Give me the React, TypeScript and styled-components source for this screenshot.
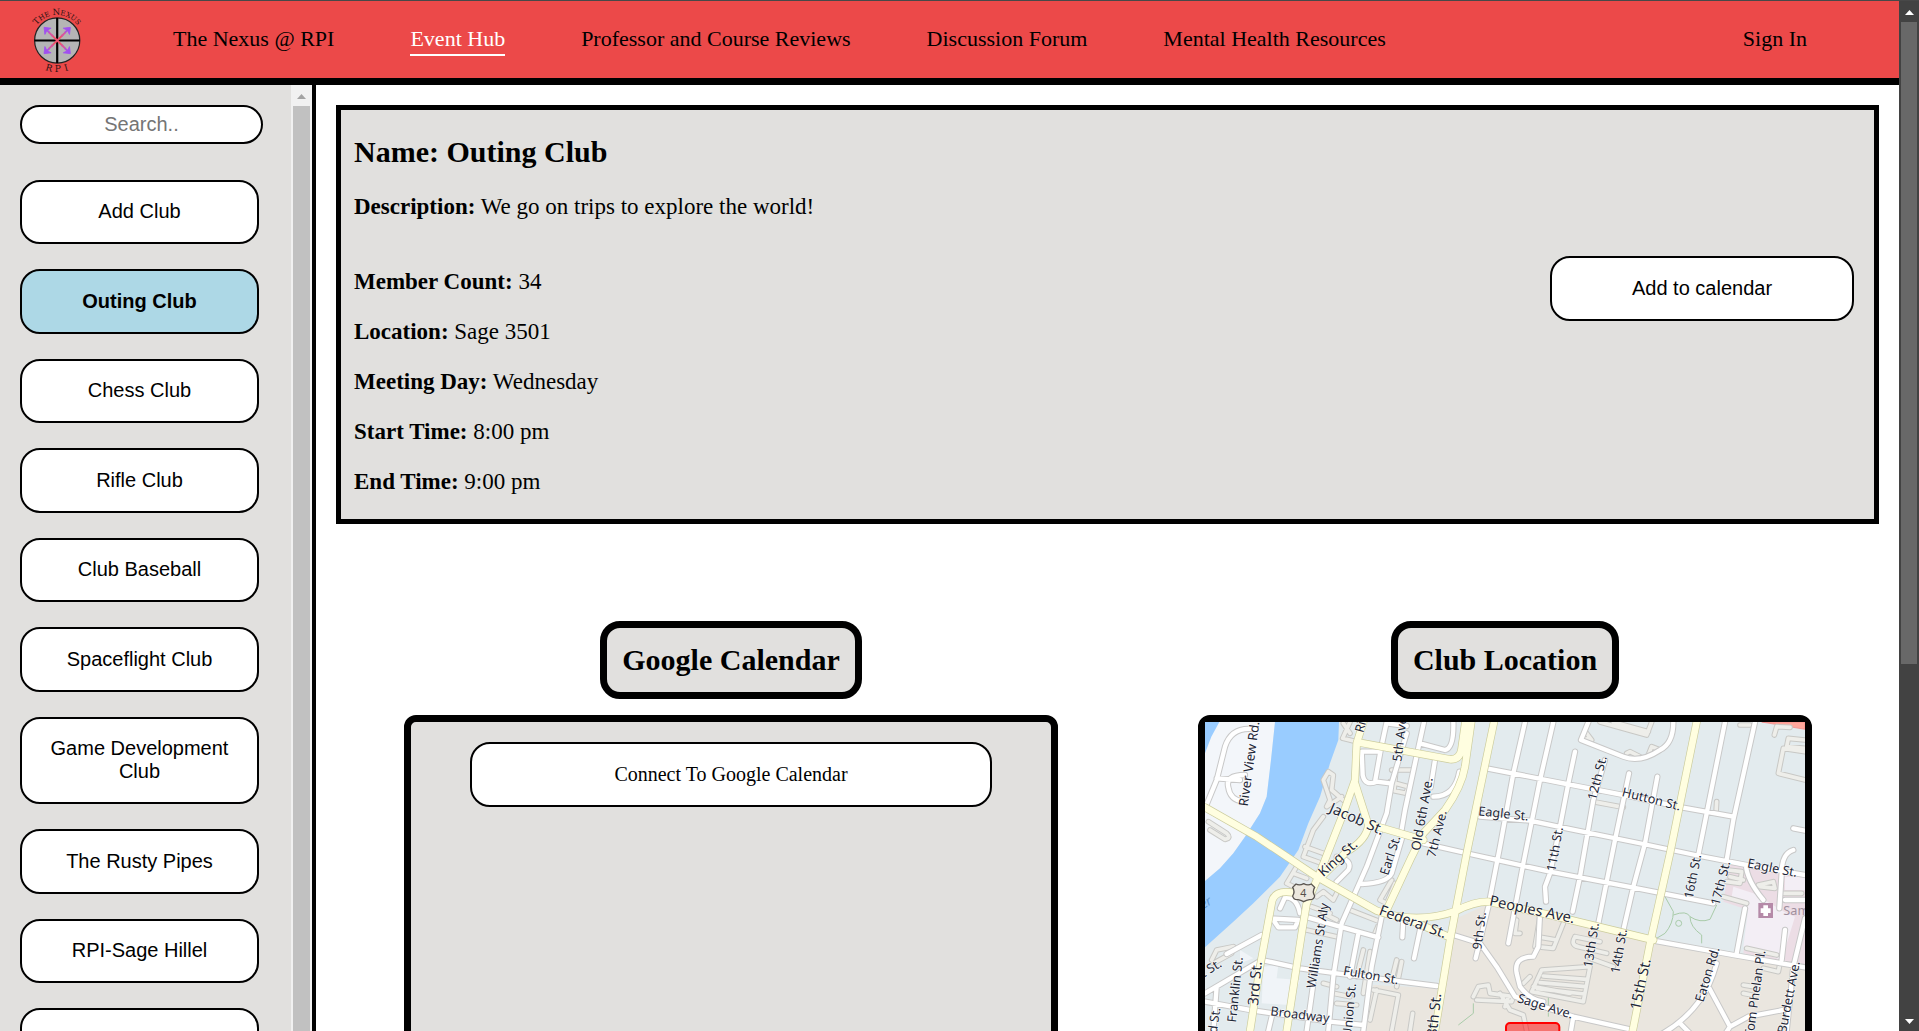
import React from "react";
import styled, { createGlobalStyle } from "styled-components";

const serif = '"Liberation Serif", "Times New Roman", serif';
const sans = '"Liberation Sans", Arial, sans-serif';
const grey = "#e1e0de";

const GlobalStyle = createGlobalStyle`
  *, *::before, *::after { box-sizing: border-box; }
  body { margin: 0; background: #fff; color: #000; font-family: ${serif}; }
  h2, p, ul, dl, dd { margin: 0; padding: 0; }
`;

const Viewport = styled.div`
  display: flex;
  height: 100vh;
  overflow: hidden;
  border-top: 1px solid #484848;
`;

const Page = styled.div`
  flex: 1;
  min-width: 0;
  display: flex;
  flex-direction: column;
`;

const Header = styled.header`
  flex: none;
  display: flex;
  align-items: center;
  height: 84px;
  padding: 0 92px 0 22px;
  background: #ec4949;
  border-bottom: 7px solid #000;
`;

const HomeLink = styled.a`
  display: flex;
  margin-right: 81px;
`;

const Nav = styled.nav`
  flex: 1;
  display: flex;
  gap: 76px;
`;

const NavLink = styled.a<{ $active?: boolean }>`
  padding: 3px 0;
  font-size: 22px;
  line-height: 25px;
  white-space: nowrap;
  text-decoration: none;
  color: ${(p) => (p.$active ? "#fff" : "#000")};
  border-bottom: 2px solid ${(p) => (p.$active ? "#fff" : "transparent")};
`;

const Body = styled.div`
  flex: 1;
  min-height: 0;
  display: flex;
`;

const Sidebar = styled.aside`
  flex: none;
  display: flex;
  width: 316px;
  overflow: hidden;
  background: ${grey};
  border-right: 4px solid #000;
`;

const SidebarContent = styled.div`
  flex: 1;
  padding: 20px 28px 20px 20px;
`;

const Search = styled.input`
  display: block;
  width: 100%;
  height: 39px;
  padding: 0;
  border: 2px solid #000;
  border-radius: 20px;
  background: #fff;
  font-family: ${sans};
  font-size: 20px;
  text-align: center;
  &::placeholder { color: #757575; }
`;

const ClubList = styled.ul`
  display: grid;
  grid-auto-rows: minmax(64px, auto) minmax(65px, auto);
  gap: 25px;
  margin-top: 36px;
  padding-right: 4px;
  list-style: none;
`;

const ClubItem = styled.li`
  display: grid;
`;

const PillButton = styled.button<{ $active?: boolean; $serif?: boolean }>`
  width: 100%;
  padding: 19px 20px;
  border: 2px solid #000;
  border-radius: 20px;
  background: ${(p) => (p.$active ? "#add8e6" : "#fff")};
  color: #000;
  font-family: ${(p) => (p.$serif ? serif : sans)};
  font-size: 20px;
  font-weight: ${(p) => (p.$active ? 700 : 400)};
  line-height: 23px;
  cursor: pointer;
`;

const ListButton = styled(PillButton)`
  padding: 18px 20px 19px;
`;

const Main = styled.main`
  flex: 1;
  min-width: 0;
  padding: 20px;
  overflow: hidden;
`;

const InfoPanel = styled.section`
  padding: 25px 20px 24px 13px;
  border: 5px solid #000;
  background: ${grey};
`;

const Heading = styled.h2`
  font-size: 30px;
  line-height: 34px;
`;

const Line = styled.p`
  font-size: 23px;
  line-height: 26px;
`;

const Description = styled(Line)`
  margin-top: 25px;
`;

const InfoRow = styled.div`
  display: flex;
  align-items: flex-start;
  justify-content: space-between;
  margin-top: 36px;
`;

const Details = styled.div`
  display: grid;
  gap: 24px;
  padding-top: 13px;
`;

const CalendarAction = styled.div`
  width: 304px;
`;

const Widgets = styled.div`
  display: flex;
  gap: 140px;
  margin-top: 97px;
  padding: 0 67px 0 68px;
`;

const Widget = styled.section<{ $width?: number }>`
  flex: ${(p) => (p.$width ? `0 1 ${p.$width}px` : "1 1 0")};
  min-width: 0;
  display: flex;
  flex-direction: column;
  align-items: center;
  gap: 16px;
`;

const WidgetTitle = styled(Heading)`
  padding: 15px;
  border: 7px solid #000;
  border-radius: 20px;
  background: ${grey};
  white-space: nowrap;
`;

const Frame = styled.div`
  width: 100%;
  min-height: 614px;
  border: 7px solid #000;
  border-radius: 12px;
  background: ${grey};
`;

const CalendarFrame = styled(Frame)`
  padding: 20px 59px;
`;

const MapFrame = styled(Frame)`
  background: #000;
`;

const MapSvg = styled.svg`
  display: block;
  width: 100%;
`;

const ScrollTrack = styled.div<{ $width: number; $bg: string }>`
  flex: none;
  display: flex;
  flex-direction: column;
  width: ${(p) => p.$width}px;
  background: ${(p) => p.$bg};
`;

const ScrollArrow = styled.svg`
  flex: none;
  display: block;
  width: 100%;
  height: 21px;
`;

const ScrollRun = styled.div`
  flex: 1;
  min-height: 0;
  padding: 0 2px;
`;

const ScrollThumb = styled.div<{ $color: string; $size: string }>`
  height: ${(p) => p.$size};
  background: ${(p) => p.$color};
`;

function Logo() {
  const ends = [45, 135, 225, 315];
  return (
    <svg width="70" height="76" viewBox="22 1 70 76" role="img" aria-label="The Nexus RPI">
      <defs>
        <path id="logoTop" d="M 31.7 39.5 A 25.5 25.5 0 0 1 82.7 39.5" />
      </defs>
      <circle cx="57.2" cy="39.5" r="22.6" fill="#b5b5b5" stroke="#222" strokeWidth="1.2" />
      <path d="M57.2 17V62M34.6 39.5H79.8" stroke="#000" strokeWidth="2.2" />
      {ends.map((a) => (
        <g key={a} transform={`translate(57.2 39.5) rotate(${a})`}>
          <path d="M0 0H8" stroke="#f0506c" strokeWidth="1.8" />
          <path d="M6 0H12" stroke="#d8559f" strokeWidth="1.8" />
          <path d="M11 0H16" stroke="#b052dc" strokeWidth="1.8" />
          <path d="M13 -4.4L18.6 0L13 4.4L14.4 0Z" fill="#a050f0" stroke="#a050f0" strokeWidth="0.8" />
        </g>
      ))}
      <g fill="#2a1212" fontFamily='"DejaVu Serif", serif'>
        <text fontSize="7" textAnchor="middle">
          <textPath href="#logoTop" startOffset="50%">
            <tspan fontSize="8.5">T</tspan>HE <tspan fontSize="8.5">N</tspan>EXUS
          </textPath>
        </text>
        <g fontSize="9" textAnchor="middle">
          <text transform="translate(48.3 70) rotate(16)">R</text>
          <text transform="translate(57.7 71.2)">P</text>
          <text transform="translate(67 69.8) rotate(-16)">I</text>
        </g>
      </g>
    </svg>
  );
}

const minorRoads = [
  "M45 325L80 240L105 140Q125 78 195 88",
  "M80 235L150 240M165 225Q105 225 115 262Q120 300 160 305",
  "M590 66L572 150L556 240M590 70L650 78",
  "M702 66L675 190L645 330L632 405",
  "M690 130L765 150Q792 145 790 66",
  "M735 180L722 262M808 215Q795 290 730 290",
  "M570 155L515 155L518 225Q525 260 560 245L600 250",
  "M650 100L605 250L590 340L530 500L455 670L430 830L415 993",
  "M640 400L605 520Q590 550 515 552",
  "M440 470Q490 480 475 510L440 545",
  "M700 430L840 462L930 482L1080 515L1330 563L1570 610",
  "M870 350L1020 362L1130 385L1360 432L1530 468L1670 495L1845 525",
  "M890 205L1130 252L1300 285L1475 322L1630 350",
  "M1005 66L970 220L930 440L895 620L857 775",
  "M1090 66L1050 240L1000 490L955 730",
  "M1155 155L1135 250L1110 380L1080 520L1065 560L1068 605",
  "M1245 180L1210 300L1170 530L1148 635",
  "M1195 66L1173 120L1300 170Q1350 190 1410 150Q1450 130 1450 66",
  "M1317 220L1275 420L1225 670",
  "M1402 230L1365 430L1330 560L1300 690",
  "M1605 66L1550 340L1525 465",
  "M1695 66L1630 360L1610 480",
  "M1390 722L1630 765L1845 802",
  "M1665 625L1640 760",
  "M1810 450Q1775 460 1775 520L1768 625",
  "M1668 495Q1670 540 1720 600",
  "M1845 655L1810 800L1790 993",
  "M1785 600L1845 600M1810 385L1845 392",
  "M1785 690L1775 780",
  "M1580 790Q1560 860 1530 900Q1480 970 1400 1010",
  "M1550 850L1620 980L1675 950L1780 930",
  "M1470 970L1500 1000M1620 980L1600 1010",
  "M790 705L870 730L920 800L975 890L1060 920L1150 950L1330 990",
  "M1150 950L1140 1010",
  "M1050 640L1045 740L1030 770Q970 770 980 820L990 860Q1020 900 1060 905",
  "M45 880L215 780M110 762L215 705",
  "M215 780L330 805L440 820L740 858",
  "M45 905L180 930L420 965L520 975",
  "M345 650L450 680L565 712",
  "M505 700L480 830",
  "M575 650L545 800L520 993",
  "M370 850L350 993M80 860L70 993M245 950L235 993",
  "M690 690L672 775M640 660L637 712",
  "M330 640Q320 590 285 592L270 625M240 655L325 660L315 682L265 682L250 660",
];

const serviceRoads = [
  "M55 365L110 400Q125 415 105 418L60 390",
  "M480 66L458 115L500 125M460 70L480 100",
  "M605 210L670 210M600 245L655 260L648 280L612 272L618 205",
  "M415 215L400 240L420 300L410 320L455 290M415 215L430 225L425 270L460 300",
  "M400 350L370 390L340 470L395 490M345 440L400 460",
  "M320 500L290 550L330 570M310 520L350 535",
  "M380 590L400 575L430 600L445 570M400 640L440 660M365 620L420 640M350 690L440 710",
  "M605 540L570 600L590 610L615 550",
  "M480 630L570 665L555 700",
  "M520 750L500 830M540 755L520 880M400 850L440 860M430 880L480 890M440 910L500 915",
  "M620 780L605 840M635 785L620 860M550 870L625 885L605 993M560 870L540 960M668 940L660 993",
  "M65 780L80 750L130 740L125 760L70 790",
  "M980 660L975 700L990 700",
  "M1050 650L1035 740M1040 710L1100 720",
  "M1120 670L1090 745L1040 740",
  "M1155 710Q1140 735 1165 740L1250 760M1155 710L1230 725",
  "M1210 305L1300 322M1580 305L1578 340",
  "M1190 100L1205 120L1180 115M1310 160L1320 155L1350 170M1375 165L1385 140L1410 150",
  "M1230 66L1370 105L1385 66M1270 66L1375 95",
  "M1650 75L1680 75M1753 105L1760 80L1800 82",
  "M1845 120L1795 115L1790 140L1845 145M1845 155L1780 145L1765 220L1845 240",
  "M1615 510L1655 515L1650 550L1610 545M1620 530L1660 540",
  "M1705 555L1750 545L1755 565L1710 560M1780 580L1835 580M1600 590L1670 610",
  "M1030 860L1140 880M1020 830L1000 850M850 890L865 860L895 855L900 880L970 890L965 905L860 900",
  "M1055 810L1200 800L1180 905L1025 875Z",
  "M1060 828L1190 838M1050 848L1187 860M1042 866L1183 882",
  "M930 880L960 930L1000 945L1010 993M955 890L945 920",
  "M1660 855L1690 860M1660 880L1685 885M1670 745L1760 765M1720 805L1765 815L1770 790",
  "M1200 775L1270 800",
];

const mainRoads = [
  "M45 322L200 410L380 530L560 632Q680 675 800 632Q850 605 895 605L1080 645L1390 720",
  "M660 660L770 708",
  "M520 66L500 130L495 240L460 340L385 530L350 610L335 700L290 993L280 1300",
  "M495 250L535 375Q530 420 470 455L395 530",
  "M510 128L780 178Q808 180 814 150L826 66",
  "M844 66L825 200Q815 260 765 330L700 400L665 470L590 630",
  "M535 372L700 420",
  "M912 66L830 460L780 720L735 993L690 1300",
  "M310 578Q250 568 245 610L210 800L180 993L150 1300",
  "M1520 66L1440 460L1380 730L1328 993L1280 1300",
];

const labels: [string, number, number, number, number?][] = [
  ["River View Rd.", 173, 320, -82, 39],
  ["Ri", 520, 100, -75],
  ["5th Ave.", 634, 186, -83],
  ["Jacob St.", 415, 335, 24, 44],
  ["King St.", 400, 532, -42, 40],
  ["Earl St.", 594, 528, -72],
  ["Old 6th Ave.", 690, 454, -80, 39],
  ["7th Ave.", 736, 474, -76],
  ["Eagle St.", 864, 346, 6],
  ["Federal St.", 565, 643, 20, 43],
  ["Peoples Ave.", 896, 616, 12, 44],
  ["9th St.", 874, 750, -83],
  ["Williams St Aly", 376, 866, -81],
  ["Fulton St.", 458, 824, 10],
  ["Union St.", 484, 1012, -85],
  ["Franklin St.", 138, 968, -84],
  ["3rd St.", 204, 918, -85, 44],
  ["Grant St.", -34, 880, -32],
  ["2nd St.", 74, 1046, -82],
  ["Broadway", 240, 946, 7],
  ["8th St.", 740, 1012, -84, 44],
  ["11th St.", 1096, 516, -80],
  ["12th St.", 1218, 302, -76],
  ["Hutton St.", 1294, 288, 14],
  ["13th St.", 1206, 804, -81],
  ["14th St.", 1288, 822, -80],
  ["15th St.", 1350, 932, -78, 44],
  ["16th St.", 1508, 598, -79],
  ["17th St.", 1588, 618, -76],
  ["Eagle St.", 1670, 502, 11],
  ["Eaton Rd.", 1540, 908, -73],
  ["Tom Phelan Pl.", 1690, 1012, -82],
  ["Burdett Ave.", 1788, 1002, -79],
  ["Sage Ave.", 980, 906, 17],
];

function Roads({ paths, casing, fill, outer, inner }: {
  paths: string[]; casing: string; fill: string; outer: number; inner: number;
}) {
  const d = paths.join("");
  return (
    <g fill="none" strokeLinecap="round" strokeLinejoin="round">
      <path d={d} stroke={casing} strokeWidth={outer} />
      <path d={d} stroke={fill} strokeWidth={inner} />
    </g>
  );
}

function ClubMap() {
  return (
    <MapSvg viewBox="45 66 1800 1800" role="img" aria-label="Map of the club location">
      <rect x="45" y="66" width="1800" height="1800" fill="#e3ebee" />
      <path d="M45 66H255L243 180L230 290L210 340L165 410L130 460L90 505L45 543Z" fill="#f3f6fa" />
      <path d="M45 66H88L64 110L45 160Z" fill="#99ccff" />
      <path
        d="M255 66H447L445 120L420 190L390 290L355 370L325 450L270 530L190 610L130 665L45 742V543L90 505L130 460L165 410L210 340L230 290L243 180Z"
        fill="#99ccff"
      />
      <path d="M790 720L800 655L895 612L1140 665L1390 725L1640 768L1845 810V1866H500L520 993L550 855L760 865Z" fill="#eae6df" />
      <path d="M220 800L265 795L260 835L330 840L300 915L215 910ZM150 750L190 775L150 790Z" fill="#f0f4f8" />
      <path d="M1620 485L1845 530V800L1660 760L1675 630L1600 605Z" fill="#ecdde5" />
      <path d="M1630 560L1690 580L1790 640L1815 650L1775 780L1660 740L1675 625L1625 590ZM1785 530H1845V570H1785Z" fill="#f3eef5" />
      <path d="M1715 66H1845V88Z" fill="#ffa79c" stroke="#f08080" strokeWidth="2" />
      <path
        d="M1425 590L1450 635Q1450 670 1425 700L1398 716M1450 645Q1490 630 1500 650Q1530 670 1560 658L1580 615M1500 650Q1500 680 1535 705V730M850 910V940L805 975M1075 890V950"
        fill="none" stroke="#a9cba9" strokeWidth="3"
      />
      <circle cx="1466" cy="670" r="9" fill="none" stroke="#a9cba9" strokeWidth="3" />
      <Roads paths={serviceRoads} casing="#c8c8c5" fill="#eeeeea" outer={17} inner={11} />
      <Roads paths={minorRoads} casing="#c8c8c8" fill="#ffffff" outer={19} inner={13} />
      <Roads paths={mainRoads} casing="#cccc9c" fill="#fffee0" outer={24} inner={20} />
      <rect x="1705" y="609" width="44" height="45" fill="#b58aa8" />
      <path d="M1720 616H1734V625H1742V639H1734V648H1720V639H1712V625H1720Z" fill="#fff" />
      <path
        d="M318 552Q328 558 341 551Q354 558 364 552L374 562Q366 575 374 588Q372 600 358 599Q350 600 341 605Q332 600 324 599Q310 600 308 588Q316 575 308 562Z"
        fill="#ece8df" stroke="#5a5550" strokeWidth="4"
      />
      <g fontFamily='"Noto Sans", "Open Sans", sans-serif' fill="#1e2738">
        <text x="331" y="592" fontSize="32" fill="#554f48">4</text>
        <text transform="translate(-2 654) rotate(-32)" fontSize="38" fill="#5f9ad8" fontStyle="italic">River</text>
        <text x="1780" y="645" fontSize="38" fill="#a08f9d">Samaritan</text>
        <g stroke="#ffffff" strokeWidth="4" strokeOpacity="0.7" paintOrder="stroke">
          {labels.map(([text, x, y, angle, size]) => (
            <text key={`${text}${x}`} transform={`translate(${x} ${y}) rotate(${angle})`} fontSize={size ?? 38}>
              {text}
            </text>
          ))}
        </g>
      </g>
      <rect x="948" y="969" width="160" height="110" rx="12" fill="#ff0000" fillOpacity="0.5" stroke="#ff0000" strokeWidth="6" />
    </MapSvg>
  );
}

function Arrow({ width, color, down }: { width: number; color: string; down?: boolean }) {
  const c = Math.floor(width / 2);
  return (
    <ScrollArrow viewBox={`0 0 ${width} 21`} aria-hidden="true">
      <path d={down ? `M${c - 4} 9H${c + 5}L${c + 0.5} 14Z` : `M${c - 4} 14H${c + 5}L${c + 0.5} 9Z`} fill={color} />
    </ScrollArrow>
  );
}

const navItems = [
  "The Nexus @ RPI",
  "Event Hub",
  "Professor and Course Reviews",
  "Discussion Forum",
  "Mental Health Resources",
];

const clubs = [
  "Add Club",
  "Outing Club",
  "Chess Club",
  "Rifle Club",
  "Club Baseball",
  "Spaceflight Club",
  "Game Development Club",
  "The Rusty Pipes",
  "RPI-Sage Hillel",
  "Ski Club",
];

const details = [
  ["Member Count:", "34"],
  ["Location:", "Sage 3501"],
  ["Meeting Day:", "Wednesday"],
  ["Start Time:", "8:00 pm"],
  ["End Time:", "9:00 pm"],
];

export default function App() {
  return (
    <>
      <GlobalStyle />
      <Viewport>
        <Page>
          <Header>
            <HomeLink href="#home">
              <Logo />
            </HomeLink>
            <Nav>
              {navItems.map((item) => (
                <NavLink key={item} href="#nav" $active={item === "Event Hub"}>
                  {item}
                </NavLink>
              ))}
            </Nav>
            <NavLink href="#signin">Sign In</NavLink>
          </Header>
          <Body>
            <Sidebar>
              <SidebarContent>
                <Search type="text" placeholder="Search.." aria-label="Search clubs" />
                <ClubList>
                  {clubs.map((club) => (
                    <ClubItem key={club}>
                      <ListButton type="button" $active={club === "Outing Club"}>
                        {club}
                      </ListButton>
                    </ClubItem>
                  ))}
                </ClubList>
              </SidebarContent>
              <ScrollTrack $width={21} $bg="#f1f1f1">
                <Arrow width={21} color="#a3a3a3" />
                <ScrollRun>
                  <ScrollThumb $color="#c1c1c1" $size="100%" />
                </ScrollRun>
              </ScrollTrack>
            </Sidebar>
            <Main>
              <InfoPanel>
                <Heading>Name: Outing Club</Heading>
                <Description>
                  <b>Description:</b> We go on trips to explore the world!
                </Description>
                <InfoRow>
                  <Details>
                    {details.map(([label, value]) => (
                      <Line key={label}>
                        <b>{label}</b> {value}
                      </Line>
                    ))}
                  </Details>
                  <CalendarAction>
                    <PillButton type="button">Add to calendar</PillButton>
                  </CalendarAction>
                </InfoRow>
              </InfoPanel>
              <Widgets>
                <Widget>
                  <WidgetTitle>Google Calendar</WidgetTitle>
                  <CalendarFrame>
                    <PillButton type="button" $serif>
                      Connect To Google Calendar
                    </PillButton>
                  </CalendarFrame>
                </Widget>
                <Widget $width={614}>
                  <WidgetTitle>Club Location</WidgetTitle>
                  <MapFrame>
                    <ClubMap />
                  </MapFrame>
                </Widget>
              </Widgets>
            </Main>
          </Body>
        </Page>
        <ScrollTrack $width={20} $bg="#424242">
          <Arrow width={20} color="#ffffff" />
          <ScrollRun>
            <ScrollThumb $color="#686868" $size="65%" />
          </ScrollRun>
          <Arrow width={20} color="#ffffff" down />
        </ScrollTrack>
      </Viewport>
    </>
  );
}
